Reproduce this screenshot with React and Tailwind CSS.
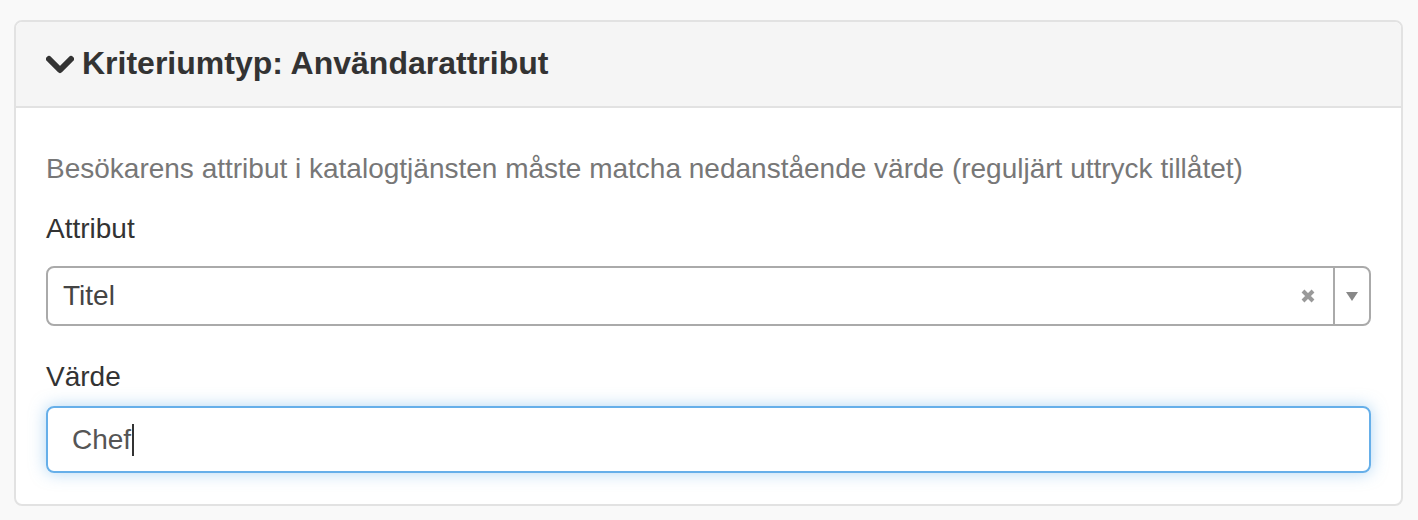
import React from "react";

export default function App() {
  return (
    <div className="w-[1418px] h-[520px] bg-[#f9f9f9] pt-[20px] pl-[14px]" style={{ fontFamily: '"Liberation Sans", Arial, sans-serif' }}>
      <div className="w-[1389px] h-[486px] bg-white border-2 border-[#e2e2e2] rounded-[8px] overflow-hidden flex flex-col">
        <div className="h-[86px] bg-[#f5f5f5] border-b-2 border-[#e2e2e2] flex items-center px-[30px] gap-[8px] shrink-0">
          <svg width="28" height="20" viewBox="0 0 28 20" className="mt-[1px]">
            <polyline points="3,4 14,15 25,4" fill="none" stroke="#333" strokeWidth="6" strokeLinecap="round" strokeLinejoin="round" />
          </svg>
          <span className="text-[32px] font-bold text-[#333] leading-none mb-[2px]">Kriteriumtyp: Användarattribut</span>
        </div>
        <div className="flex flex-col px-[30px] pt-[41px]">
          <div className="text-[28px] leading-[40px] text-[#777]">Besökarens attribut i katalogtjänsten måste matcha nedanstående värde (reguljärt uttryck tillåtet)</div>
          <div className="text-[28px] leading-[40px] text-[#333] mt-[20px]">Attribut</div>
          <div className="mt-[17px] h-[60px] border-2 border-[#aaa] rounded-[8px] flex items-center">
            <div className="flex-1 pl-[15px] text-[28px] text-[#444]">Titel</div>
            <div className="w-[50px] flex items-center justify-center">
              <svg width="16" height="16" viewBox="0 0 16 16">
                <path d="M3 3 L13 13 M13 3 L3 13" stroke="#999" strokeWidth="4" strokeLinecap="butt" />
              </svg>
            </div>
            <div className="w-[2px] self-stretch bg-[#aaa]" />
            <div className="w-[34px] flex items-center justify-center">
              <svg width="12" height="10" viewBox="0 0 12 10">
                <polygon points="0,1 12,1 6,10" fill="#888" />
              </svg>
            </div>
          </div>
          <div className="text-[28px] leading-[40px] text-[#333] mt-[31px]">Värde</div>
          <div className="mt-[9px] h-[67px] border-2 border-[#66afe9] rounded-[8px] flex items-center pl-[24px] shadow-[0_0_16px_rgba(102,175,233,0.5)]">
            <span className="text-[28px] text-[#555]">Chef</span>
            <span className="w-[2px] h-[32px] bg-[#333] ml-[1px]" />
          </div>
        </div>
      </div>
    </div>
  );
}
